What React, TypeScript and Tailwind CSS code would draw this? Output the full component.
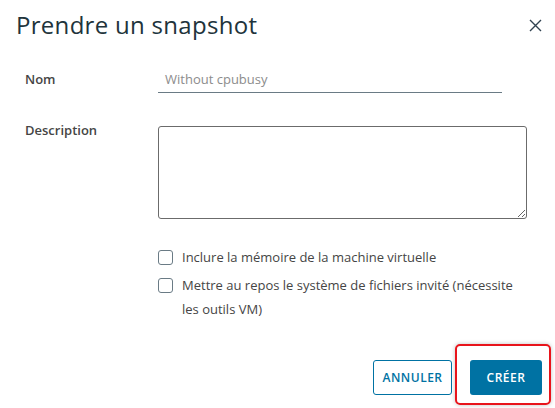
import React from 'react';

const font = { fontFamily: '"Open Sans", "Liberation Sans", sans-serif' };

export default function App() {
  return (
    <div className="relative h-[408px] w-[555px] overflow-hidden bg-white text-[#21333b]" style={font}>
      {/* Header */}
      <div className="flex items-start justify-between pl-4 pr-[13px] pt-[9px]">
        <h1 className="text-[24px] font-normal leading-[32px] tracking-[0.3px] text-[#21333b]">Prendre un snapshot</h1>
        <button className="mt-[9px] flex h-[14px] w-[14px] items-center justify-center text-[#314351]">
          <svg width="13" height="13" viewBox="0 0 13 13" fill="none" stroke="currentColor" strokeWidth="1.4">
            <path d="M1 1 L12 12 M12 1 L1 12" />
          </svg>
        </button>
      </div>

      {/* Form */}
      <div className="mt-[26px] grid grid-cols-[133px_1fr] pl-[25px] text-[13px]">
        {/* Nom */}
        <label className="flex h-[26px] items-center font-semibold text-[#454545]">Nom</label>
        <div className="flex h-[26px] w-[344px] items-center border-b border-[#6a7b85] pl-[7px] text-[#8c8c8c]">
          Without cpubusy
        </div>

        {/* Description */}
        <label className="mt-[29px] font-semibold leading-[16px] text-[#454545]">Description</label>
        <div className="mt-[33px]">
          <textarea className="block h-[93px] w-[369px] rounded-[3px] border border-[#6b6b6b] bg-white" />
        </div>

        <div />
        <div className="mt-[26px] flex flex-col gap-[4px] text-[#454545]">
          <label className="flex items-start gap-[9px] leading-[24px]">
            <span className="mt-[5px] h-[15px] w-[15px] shrink-0 rounded-[3px] border border-[#6a7b85]" />
            <span>Inclure la mémoire de la machine virtuelle</span>
          </label>
          <label className="flex items-start gap-[9px] leading-[24px]">
            <span className="mt-[5px] h-[15px] w-[15px] shrink-0 rounded-[3px] border border-[#6a7b85]" />
            <span className="w-[350px]">Mettre au repos le système de fichiers invité (nécessite les outils VM)</span>
          </label>
        </div>
      </div>

      {/* Footer */}
      <div className="mt-[39px] flex justify-end gap-[18px] pr-[13px]">
        <button className="h-[35px] w-[79px] rounded-[3px] border border-[#0072a3] text-[12px] font-semibold tracking-[0.5px] text-[#0072a3]">
          ANNULER
        </button>
        <div className="relative">
          <button className="h-[35px] w-[72px] rounded-[3px] bg-[#0072a3] text-[12px] font-semibold tracking-[0.5px] text-white">
            CRÉER
          </button>
          <div className="pointer-events-none absolute -bottom-[10px] -left-[15px] -right-[9px] -top-[16px] rounded-[5px] border-2 border-[#e8141b] shadow-[0_0_4px_rgba(0,0,0,0.25)]" />
        </div>
      </div>
    </div>
  );
}
